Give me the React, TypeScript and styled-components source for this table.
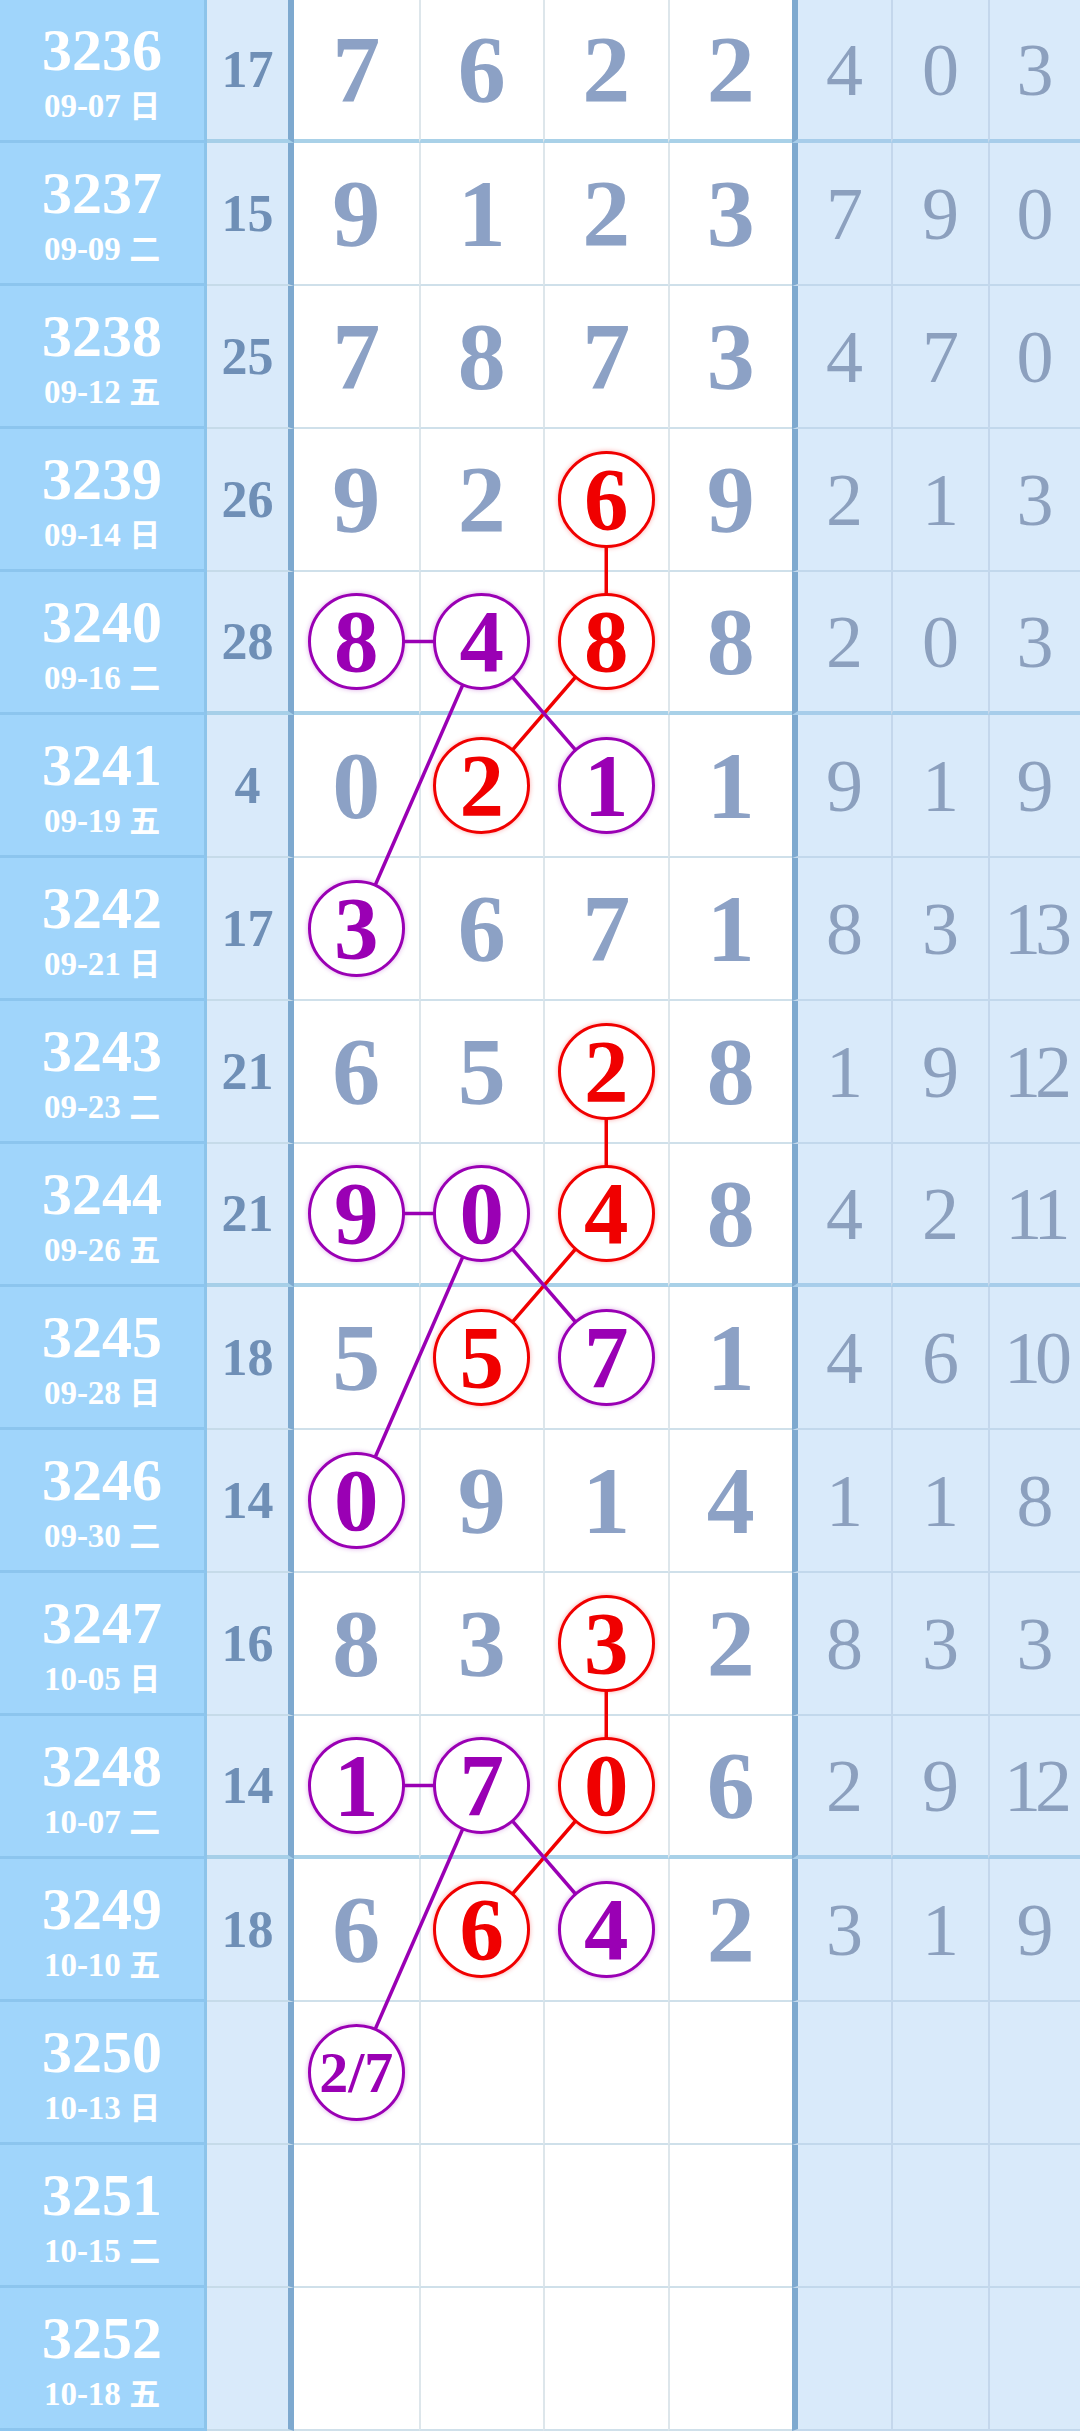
import styled, { createGlobalStyle } from "styled-components"

const ROW_H = 143
const WHITE_LEFT = 294
const WHITE_W = 124.5

const GlobalStyle = createGlobalStyle`
  body {
    margin: 0;
    background: #fff;
  }
`

type Row = { no: string; date: string; wd: string; sum: string; balls: string[]; tail: string[] }

const rows: Row[] = [
  { no: "3236", date: "09-07", wd: "日", sum: "17", balls: ["7", "6", "2", "2"], tail: ["4", "0", "3"] },
  { no: "3237", date: "09-09", wd: "二", sum: "15", balls: ["9", "1", "2", "3"], tail: ["7", "9", "0"] },
  { no: "3238", date: "09-12", wd: "五", sum: "25", balls: ["7", "8", "7", "3"], tail: ["4", "7", "0"] },
  { no: "3239", date: "09-14", wd: "日", sum: "26", balls: ["9", "2", "6", "9"], tail: ["2", "1", "3"] },
  { no: "3240", date: "09-16", wd: "二", sum: "28", balls: ["8", "4", "8", "8"], tail: ["2", "0", "3"] },
  { no: "3241", date: "09-19", wd: "五", sum: "4", balls: ["0", "2", "1", "1"], tail: ["9", "1", "9"] },
  { no: "3242", date: "09-21", wd: "日", sum: "17", balls: ["3", "6", "7", "1"], tail: ["8", "3", "13"] },
  { no: "3243", date: "09-23", wd: "二", sum: "21", balls: ["6", "5", "2", "8"], tail: ["1", "9", "12"] },
  { no: "3244", date: "09-26", wd: "五", sum: "21", balls: ["9", "0", "4", "8"], tail: ["4", "2", "11"] },
  { no: "3245", date: "09-28", wd: "日", sum: "18", balls: ["5", "5", "7", "1"], tail: ["4", "6", "10"] },
  { no: "3246", date: "09-30", wd: "二", sum: "14", balls: ["0", "9", "1", "4"], tail: ["1", "1", "8"] },
  { no: "3247", date: "10-05", wd: "日", sum: "16", balls: ["8", "3", "3", "2"], tail: ["8", "3", "3"] },
  { no: "3248", date: "10-07", wd: "二", sum: "14", balls: ["1", "7", "0", "6"], tail: ["2", "9", "12"] },
  { no: "3249", date: "10-10", wd: "五", sum: "18", balls: ["6", "6", "4", "2"], tail: ["3", "1", "9"] },
  { no: "3250", date: "10-13", wd: "日", sum: "", balls: ["2/7", "", "", ""], tail: ["", "", ""] },
  { no: "3251", date: "10-15", wd: "二", sum: "", balls: ["", "", "", ""], tail: ["", "", ""] },
  { no: "3252", date: "10-18", wd: "五", sum: "", balls: ["", "", "", ""], tail: ["", "", ""] },
]

const RED = "#f00000"
const PURPLE = "#9a00b4"

// circled cells and connecting lines, repeated for each group
const marks: Record<string, string> = { "14-0": PURPLE }
const links: { a: [number, number]; b: [number, number]; color: string }[] = []
for (const r of [3, 7, 11]) {
  marks[`${r}-2`] = RED
  marks[`${r + 1}-0`] = PURPLE
  marks[`${r + 1}-1`] = PURPLE
  marks[`${r + 1}-2`] = RED
  marks[`${r + 2}-1`] = RED
  marks[`${r + 2}-2`] = PURPLE
  marks[`${r + 3}-0`] = PURPLE
  links.push({ a: [r, 2], b: [r + 1, 2], color: RED })
  links.push({ a: [r + 1, 2], b: [r + 2, 1], color: RED })
  links.push({ a: [r + 1, 0], b: [r + 1, 1], color: PURPLE })
  links.push({ a: [r + 1, 1], b: [r + 2, 2], color: PURPLE })
  links.push({ a: [r + 1, 1], b: [r + 3, 0], color: PURPLE })
}

const isThick = (r: number) => r % 4 === 0 && r < 16

const cx = (c: number) => WHITE_LEFT + c * WHITE_W + (WHITE_W + (c > 0 ? 2 : 0)) / 2
const cy = (r: number) => r * ROW_H + (ROW_H - (isThick(r) ? 4 : 2)) / 2

const App = () => {
  return (
    <>
      <GlobalStyle />
      <Table>
        {rows.map((row, r) => (
          <RowLine key={row.no}>
            <Issue>
              <IssueNo>{row.no}</IssueNo>
              <IssueDate>
                {row.date} <span>{row.wd}</span>
              </IssueDate>
            </Issue>
            <Sum $thick={isThick(r)}>{row.sum}</Sum>
            {row.balls.map((b, c) => {
              const mark = marks[`${r}-${c}`]
              return (
                <Ball key={c} $thick={isThick(r)} $first={c === 0}>
                  {mark ? (
                    <Circle $color={mark} $small={b.length > 1}>
                      {b}
                    </Circle>
                  ) : (
                    b
                  )}
                </Ball>
              )
            })}
            {row.tail.map((t, c) => (
              <Tail key={c} $thick={isThick(r)} $first={c === 0} $wide={t.length > 1}>
                {t}
              </Tail>
            ))}
          </RowLine>
        ))}
        <Overlay width={1080} height={rows.length * ROW_H}>
          {links.map((l, i) => (
            <line
              key={i}
              x1={cx(l.a[1])}
              y1={cy(l.a[0])}
              x2={cx(l.b[1])}
              y2={cy(l.b[0])}
              stroke={l.color}
              strokeWidth={3.5}
            />
          ))}
        </Overlay>
      </Table>
    </>
  )
}

export default App

const Table = styled.div`
  position: relative;
  width: 1080px;
  font-family: "Liberation Serif", "Noto Sans CJK SC", serif;
`

const RowLine = styled.div`
  display: grid;
  grid-template-columns: 207px 87px repeat(4, 124.5px) 99px 97px 92px;
  height: ${ROW_H}px;
`

const Issue = styled.div`
  box-sizing: border-box;
  background: #a0d5fb;
  border-right: 3px solid #8dc4ea;
  border-bottom: 3px solid #8cc5ee;
  display: flex;
  flex-direction: column;
  align-items: center;
  justify-content: center;
  gap: 8px;
  padding-top: 2px;
  color: #fff;
  font-weight: bold;
`

const IssueNo = styled.div`
  font-size: 60px;
  line-height: 1;
`

const IssueDate = styled.div`
  font-size: 33px;
  line-height: 1;
  span {
    font-family: "Noto Sans CJK SC", sans-serif;
    font-size: 31px;
  }
`

const Sum = styled.div<{ $thick: boolean }>`
  box-sizing: border-box;
  background: #d9eafa;
  border-right: 6px solid #7ea9cf;
  border-bottom: ${(p) => (p.$thick ? "4px solid #a6cfe8" : "2px solid #c6dbe9")};
  display: flex;
  align-items: center;
  justify-content: center;
  color: #6f8fb6;
  font-weight: bold;
  font-size: 52px;
  line-height: 1;
`

const Ball = styled.div<{ $thick: boolean; $first: boolean }>`
  box-sizing: border-box;
  background: #fff;
  border-left: ${(p) => (p.$first ? "none" : "2px solid #dde6eb")};
  border-bottom: ${(p) => (p.$thick ? "4px solid #a9d1e8" : "2px solid #cfe0ea")};
  display: flex;
  align-items: center;
  justify-content: center;
  color: #8ca1c5;
  font-weight: bold;
  font-size: 96px;
  line-height: 1;
`

const Circle = styled.div<{ $color: string; $small: boolean }>`
  position: relative;
  z-index: 2;
  box-sizing: border-box;
  width: 97px;
  height: 97px;
  border-radius: 50%;
  border: 3.5px solid ${(p) => p.$color};
  background: #fff;
  box-shadow: 0 0 5px ${(p) => p.$color}55;
  display: flex;
  align-items: center;
  justify-content: center;
  color: ${(p) => p.$color};
  font-size: ${(p) => (p.$small ? "58px" : "89px")};
  line-height: 1;
`

const Tail = styled.div<{ $thick: boolean; $first: boolean; $wide: boolean }>`
  box-sizing: border-box;
  background: #d9eafa;
  border-left: ${(p) => (p.$first ? "6px solid #7ea9cf" : "2px solid #c4d7ec")};
  border-bottom: ${(p) => (p.$thick ? "4px solid #a7cdea" : "2px solid #c2d8ec")};
  display: flex;
  align-items: center;
  justify-content: center;
  color: #8ca0be;
  font-size: 74px;
  line-height: 1;
  letter-spacing: ${(p) => (p.$wide ? "-6px" : "0")};
`

const Overlay = styled.svg`
  position: absolute;
  left: 0;
  top: 0;
  z-index: 1;
  pointer-events: none;
`
